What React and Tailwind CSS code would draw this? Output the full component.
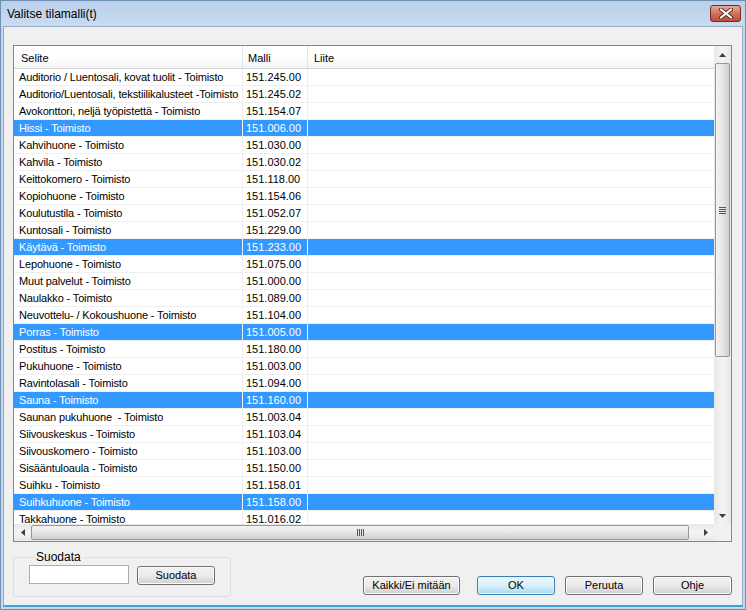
import React from 'react';

const rows = [
  ['Auditorio / Luentosali, kovat tuolit - Toimisto', '151.245.00'],
  ['Auditorio/Luentosali, tekstiilikalusteet -Toimisto', '151.245.02'],
  ['Avokonttori, neljä työpistettä - Toimisto', '151.154.07'],
  ['Hissi - Toimisto', '151.006.00', true],
  ['Kahvihuone - Toimisto', '151.030.00'],
  ['Kahvila - Toimisto', '151.030.02'],
  ['Keittokomero - Toimisto', '151.118.00'],
  ['Kopiohuone - Toimisto', '151.154.06'],
  ['Koulutustila - Toimisto', '151.052.07'],
  ['Kuntosali - Toimisto', '151.229.00'],
  ['Käytävä - Toimisto', '151.233.00', true],
  ['Lepohuone - Toimisto', '151.075.00'],
  ['Muut palvelut - Toimisto', '151.000.00'],
  ['Naulakko - Toimisto', '151.089.00'],
  ['Neuvottelu- / Kokoushuone - Toimisto', '151.104.00'],
  ['Porras - Toimisto', '151.005.00', true],
  ['Postitus - Toimisto', '151.180.00'],
  ['Pukuhuone - Toimisto', '151.003.00'],
  ['Ravintolasali - Toimisto', '151.094.00'],
  ['Sauna - Toimisto', '151.160.00', true],
  ['Saunan pukuhuone  - Toimisto', '151.003.04'],
  ['Siivouskeskus - Toimisto', '151.103.04'],
  ['Siivouskomero - Toimisto', '151.103.00'],
  ['Sisääntuloaula - Toimisto', '151.150.00'],
  ['Suihku - Toimisto', '151.158.01'],
  ['Suihkuhuone - Toimisto', '151.158.00', true],
  ['Takkahuone - Toimisto', '151.016.02'],
];

const Arrow = ({ dir }) => {
  const pts = {
    up: '0,4 3.5,0 7,4',
    down: '0,0 3.5,4 7,0',
    left: '4,0 0,3.5 4,7',
    right: '0,0 4,3.5 0,7',
  }[dir];
  const vert = dir === 'up' || dir === 'down';
  return (
    <svg width={vert ? 7 : 4} height={vert ? 4 : 7} viewBox={vert ? '0 0 7 4' : '0 0 4 7'}>
      <polygon points={pts} fill="#3f3f3f" />
    </svg>
  );
};

const Btn = ({ children, w, primary }) => (
  <button
    className={
      primary
        ? `${w} h-[19px] rounded-[3px] border border-[#3c7fb1] bg-gradient-to-b from-[#eaf6fd] via-[#d9f0fc] to-[#a7d9f5] text-[11px] text-black shadow-[inset_0_0_0_1px_#e5f4fc]`
        : `${w} h-[19px] rounded-[3px] border border-[#707070] bg-gradient-to-b from-[#f2f2f2] via-[#ebebeb] to-[#cfcfcf] text-[11px] text-black shadow-[inset_0_0_0_1px_#fcfcfc]`
    }
  >
    {children}
  </button>
);

export default function App() {
  return (
    <div className="w-[746px] h-[610px] flex flex-col bg-[#c4d8ee] border border-[#6f8fb5] font-['Liberation_Sans',Arial,sans-serif] overflow-hidden">
      {/* title bar */}
      <div className="h-[25px] flex items-start bg-gradient-to-b from-[#bad0e9] to-[#c9dbf0] pl-[6px] pr-[4px]">
        <span className="mt-[6px] text-[12px] leading-[14px] text-black">Valitse tilamalli(t)</span>
        <div className="ml-auto mt-[4px] w-[31px] h-[17px] rounded-[3px] border border-[#6e2c25] bg-gradient-to-b from-[#e4a99f] via-[#d2705f] to-[#c04a37] flex items-center justify-center">
          <svg width="14" height="11" viewBox="0 0 14 11">
            <path d="M2 1.5 L12 9.5 M12 1.5 L2 9.5" stroke="#5a2a24" strokeWidth="4" strokeLinecap="round" />
            <path d="M2 1.5 L12 9.5 M12 1.5 L2 9.5" stroke="#ffffff" strokeWidth="2.2" strokeLinecap="round" />
          </svg>
        </div>
      </div>

      {/* client area */}
      <div className="flex-1 mx-[2px] mb-[2px] bg-[#f0f0f0] border border-[#98aac2] border-b-2 border-b-[#39a3d9] flex flex-col pt-[18px] pl-[9px] pr-[10px] text-[11px] text-black">
        {/* list */}
        <div className="h-[497px] border border-[#828790] bg-white flex flex-col">
          <div className="flex flex-1 min-h-0">
            <div className="flex-1 flex flex-col overflow-hidden">
              <div className="h-[23px] shrink-0 flex bg-gradient-to-b from-white via-white to-[#f3f4f6] border-b border-[#d5d5d5]">
                <div className="w-[229px] pl-[7px] pt-[2px] flex items-center border-r border-[#e3e6ea]">Selite</div>
                <div className="w-[65px] pl-[5px] pt-[2px] flex items-center border-r border-[#e3e6ea]">Malli</div>
                <div className="flex-1 pl-[6px] pt-[2px] flex items-center">Liite</div>
              </div>
              <div className="flex-1 overflow-hidden">
                {rows.map(([name, code, sel], i) => (
                  <div
                    key={i}
                    className={`h-[17px] flex border-b border-[#f0f0f0] leading-[16px] ${sel ? 'bg-[#3399ff] text-white' : ''}`}
                  >
                    <div className="w-[229px] pl-[5px] border-r border-[#f0f0f0] whitespace-pre overflow-hidden tracking-[-0.15px]">{name}</div>
                    <div className="w-[65px] pl-[3px] border-r border-[#f0f0f0]">{code}</div>
                    <div className="flex-1" />
                  </div>
                ))}
              </div>
            </div>
            {/* vertical scrollbar */}
            <div className="w-[17px] flex flex-col bg-gradient-to-r from-[#e8e8e8] via-[#f4f4f4] to-[#e8e8e8]">
              <div className="h-[17px] flex items-center justify-center"><Arrow dir="up" /></div>
              <div className="h-[294px] mx-[1px] rounded-[2px] border border-[#979797] bg-gradient-to-r from-[#f3f3f3] via-[#e6e6e6] to-[#cfcfcf] flex items-center justify-center">
                <div className="flex flex-col gap-[1px]">
                  <div className="w-[7px] h-[1px] bg-[#555]" />
                  <div className="w-[7px] h-[1px] bg-[#555]" />
                  <div className="w-[7px] h-[1px] bg-[#555]" />
                  <div className="w-[7px] h-[1px] bg-[#555]" />
                </div>
              </div>
              <div className="flex-1" />
              <div className="h-[17px] flex items-center justify-center"><Arrow dir="down" /></div>
            </div>
          </div>
          {/* horizontal scrollbar */}
          <div className="h-[17px] flex bg-gradient-to-b from-[#e8e8e8] via-[#f4f4f4] to-[#e8e8e8]">
            <div className="w-[17px] flex items-center justify-center"><Arrow dir="left" /></div>
            <div className="w-[658px] my-[1px] rounded-[2px] border border-[#979797] bg-gradient-to-b from-[#f3f3f3] via-[#e6e6e6] to-[#cfcfcf] flex items-center justify-center">
              <div className="flex gap-[1px]">
                <div className="w-[1px] h-[7px] bg-[#555]" />
                <div className="w-[1px] h-[7px] bg-[#555]" />
                <div className="w-[1px] h-[7px] bg-[#555]" />
                <div className="w-[1px] h-[7px] bg-[#555]" />
              </div>
            </div>
            <div className="flex-1" />
            <div className="w-[17px] flex items-center justify-center"><Arrow dir="right" /></div>
            <div className="w-[17px] bg-[#f0f0f0]" />
          </div>
        </div>

        {/* bottom */}
        <div className="flex items-start mt-[8px]">
          <fieldset className="w-[218px] h-[47px] border border-[#d5dfe5] rounded-[3px] pl-[15px] pt-[1px] flex">
            <legend className="ml-[5px] px-[2px] text-[12px] leading-[14px]">Suodata</legend>
            <div className="flex items-start gap-[8px]">
              <input className="w-[100px] h-[19px] bg-white border border-[#abadb3] outline-none" />
              <button className="mt-[1px] w-[78px] h-[19px] rounded-[3px] border border-[#707070] bg-gradient-to-b from-[#f2f2f2] via-[#ebebeb] to-[#cfcfcf] text-[11px] shadow-[inset_0_0_0_1px_#fcfcfc]">
                Suodata
              </button>
            </div>
          </fieldset>
          <div className="ml-auto mt-[26px] flex items-center">
            <Btn w="w-[97px]">Kaikki/Ei mitään</Btn>
            <div className="w-[17px]" />
            <Btn w="w-[78px]" primary>OK</Btn>
            <div className="w-[10px]" />
            <Btn w="w-[78px]">Peruuta</Btn>
            <div className="w-[10px]" />
            <Btn w="w-[79px]">Ohje</Btn>
          </div>
        </div>
      </div>
    </div>
  );
}
